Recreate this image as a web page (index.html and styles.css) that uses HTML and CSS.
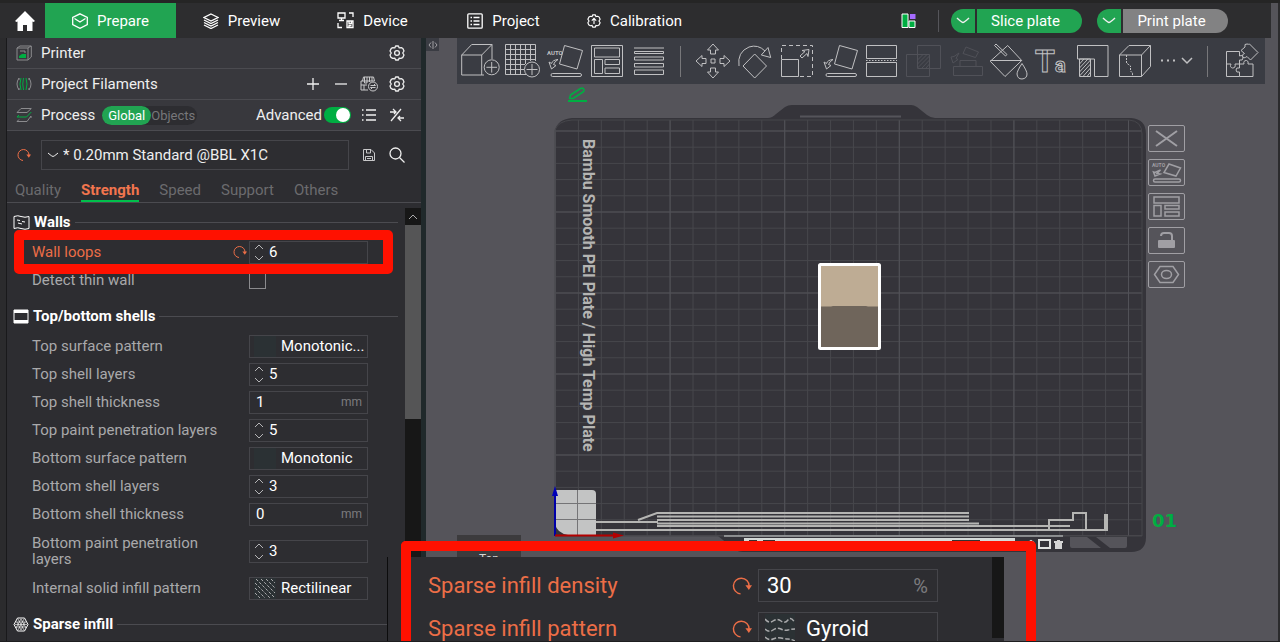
FILE: index.html
```html
<!DOCTYPE html>
<html lang="en">
<head>
    <meta charset="UTF-8">
    <meta name="viewport" content="width=device-width, initial-scale=1.0">
    <title>Slicer - Prepare</title>
    <link rel="stylesheet" href="styles.css">
</head>
<body>

<!-- shared icons -->
<svg class="sprite" aria-hidden="true">
    <symbol id="gear" viewBox="0 0 16 16">
        <path d="M5.8 2.9 L6.6 1 H9.4 L10.2 2.9 L12.3 2.6 L13.9 3.5 L15 6 L13.7 8 L15 10 L13.7 12.6 L11.9 13.4 L10.2 13.1 L9.4 15 H6.6 L5.8 13.1 L3.7 13.4 L2 12.4 L1 10 L2.3 8 L1 6 L2.3 3.4 L3.9 2.6 Z" stroke-linejoin="round"/>
        <circle cx="8" cy="8" r="2.4"/>
    </symbol>
    <symbol id="revert" viewBox="0 0 14 14">
        <path d="M6 12.5 A5.5 5.5 0 1 1 12 7"/>
        <path class="solid" d="M9.4 6.4 L14 6.4 L11.8 9.8 Z"/>
    </symbol>
    <symbol id="up" viewBox="0 0 10 6"><path d="M1 5 L5 1 L9 5"/></symbol>
    <symbol id="down" viewBox="0 0 10 6"><path d="M1 1 L5 5 L9 1"/></symbol>
    <symbol id="tilt" viewBox="0 0 38 38">
        <path d="M19.5 3.5 L37.5 8.5 L32 27 L14.5 22 Z"/>
        <rect x="6" y="31.5" width="30.5" height="3" rx="1.5"/>
        <path d="M4 20 L6.5 27 L11 23.5 L8.5 22.5 Q9.5 19.5 13 17.5 Q7.500 18 6.5 21.5 Z"/>
    </symbol>
</svg>

<header class="topbar">
    <button class="home" type="button" aria-label="Home">
        <svg width="20" height="20" viewBox="0 0 20 20"><path fill="#fff" d="M10 0 L20 10 L18.500 11 L17.500 10.500 V20 H12 V14 H8 V20 H2.500 V10.500 L1.500 11 L0 10 Z"/></svg>
    </button>
    <nav class="tabs">
        <a class="tab active" href="#">
            <svg width="16" height="16" viewBox="0 0 16 16"><path d="M8 .8 L15.300 4.500 V11.500 L8 15.300 L.7 11.500 V4.500 Z M2.500 5.500 L8 9 L13.500 5.500"/></svg>
            Prepare
        </a>
        <a class="tab" href="#">
            <svg width="16" height="16" viewBox="0 0 16 16"><path d="M8 1 L15 4.500 L8 8 L1 4.500 Z M1 7 L8 10.500 L15 7 M1 9.500 L8 13 L15 9.500 M1 12 L8 15.500 L15 12"/></svg>
            Preview
        </a>
        <a class="tab" href="#">
            <svg width="17" height="17" viewBox="0 0 17 17"><path d="M1 1 H8 V6 H1 Z M4.500 6 V8 M2 8.500 H7 M12 1 H16 V5 M1 11 V15.500 H5 M10 9 H16 V15.500 H10 Z M12 9 V11.500 H14.500 V9 M12 15 V13.500 H14.500"/></svg>
            Device
        </a>
        <a class="tab" href="#">
            <svg width="16" height="16" viewBox="0 0 16 16"><rect x=".8" y=".8" width="14.400" height="14.400" rx="1"/><path d="M3.500 4.500 H5 M6.500 4.500 H12.500 M3.500 8 H5 M6.500 8 H12.500 M3.500 11.500 H5 M6.500 11.500 H12.500"/></svg>
            Project
        </a>
        <a class="tab" href="#">
            <svg width="14" height="14" viewBox="0 0 16 16"><path d="M5.800 2.900 L6.600 1 H9.400 L10.200 2.900 L12.300 2.600 L13.900 3.500 L15 6 L13.700 8 L15 10 L13.700 12.600 L11.900 13.400 L10.200 13.100 L9.400 15 H6.600 L5.800 13.100 L3.700 13.400 L2 12.400 L1 10 L2.300 8 L1 6 L2.300 3.400 L3.900 2.600 Z M8 11.500 V6 M5.500 7.500 L8 5 L10.500 7.500"/></svg>
            Calibration
        </a>
    </nav>
    <div class="actions">
        <button class="layout" type="button" aria-label="Layout">
            <svg width="16" height="16" viewBox="0 0 16 16"><path fill="#00ae42" stroke="#fff" d="M1 1 H7 V14.500 H1 Z M8 8 H14 V14.500 H8 Z"/><path fill="#a56bff" stroke="none" d="M9 1 H14.500 V6 H9 Z"/></svg>
        </button>
        <div class="split">
            <button class="split-arrow" type="button" aria-label="Slice options"><svg width="14" height="7" viewBox="0 0 14 7"><path d="M1 1 Q6 5.500 7 5.500 Q8 5.500 13 1"/></svg></button>
            <button class="split-main" type="button">Slice plate</button>
        </div>
        <div class="split">
            <button class="split-arrow" type="button" aria-label="Print options"><svg width="14" height="7" viewBox="0 0 14 7"><path d="M1 1 Q6 5.500 7 5.500 Q8 5.500 13 1"/></svg></button>
            <button class="split-main disabled" type="button">Print plate</button>
        </div>
    </div>
</header>

<main class="workspace">
    <aside class="sidebar">
        <section class="bar">
            <svg class="bar-icon" width="16" height="16" viewBox="0 0 16 16"><path d="M1 3 L4 1 H15.300 V12 L12 15 H1 Z M1 3 H12 V15 M12 3 L15 1 M4 6 H9 V8"/><path class="green" d="M3 13 V11 L6 9 H10 V13 Z"/></svg>
            <h2>Printer</h2>
            <button class="icon-btn push" type="button" aria-label="Printer settings"><svg width="16" height="16"><use href="#gear"/></svg></button>
        </section>
        <section class="bar">
            <svg class="bar-icon" width="16" height="16" viewBox="0 0 16 16"><path d="M3 2 Q-1 8 3 14 M13 2 Q17 8 13 14 M2 3 H4 M12 3 H14 M2 13 H4 M12 13 H14"/><path class="green-line" d="M5 2 Q3 8 5 14 M7.500 2 Q6 8 7.500 14 M10 2 Q12 8 10 14"/></svg>
            <h2>Project Filaments</h2>
            <button class="icon-btn push" type="button" aria-label="Add filament"><svg width="14" height="14" viewBox="0 0 14 14"><path d="M7 1 V13 M1 7 H13"/></svg></button>
            <button class="icon-btn" type="button" aria-label="Remove filament"><svg width="14" height="14" viewBox="0 0 14 14"><path d="M1 7 H13"/></svg></button>
            <button class="icon-btn thin" type="button" aria-label="Sync filaments"><svg width="18" height="16" viewBox="0 0 18 16"><path d="M2.500 5 L3.500 1 H13.500 L14.500 5 M1 5 H14.500 M1 5 V14 H8 M4.500 1 V7 H7 V1 M9.500 1 V6 M12 1 V5 M1 9 H7 M4 9 V14"/><circle cx="13" cy="10.500" r="4.500"/><path d="M10.500 9.500 H15.500 L14 8 M15.500 11.500 H10.500 L12 13"/></svg></button>
            <button class="icon-btn" type="button" aria-label="Filament settings"><svg width="16" height="16"><use href="#gear"/></svg></button>
        </section>
        <section class="bar">
            <svg class="bar-icon" width="16" height="16" viewBox="0 0 16 16"><path d="M5 1.500 H15.300 L11 5.500 H1 Z M15 9 L11 14.500 H1 L3 12.500 M15 9 V11"/><path class="green-line" d="M1 10 H10.500 L15.300 5 M1 10 L3 8"/></svg>
            <h2>Process</h2>
            <div class="scope">
                <button class="scope-on" type="button">Global</button>
                <button type="button">Objects</button>
            </div>
            <label class="push advanced" for="advanced">Advanced</label>
            <input class="switch" type="checkbox" id="advanced" checked>
            <button class="icon-btn" type="button" aria-label="Parameter list"><svg width="16" height="14" viewBox="0 0 16 14"><path d="M1 2 H2.500 M5 2 H15 M1 7 H2.500 M5 7 H15 M1 12 H2.500 M5 12 H15"/></svg></button>
            <button class="icon-btn" type="button" aria-label="Compare presets"><svg width="16" height="16" viewBox="0 0 16 16"><path d="M2 14 L12 2 M1 5 H7 M4 2 L7 5 L5 7 M15 11 H9 M12 14 L9 11 L11 9"/></svg></button>
        </section>

        <div class="preset">
            <button class="revert" type="button" aria-label="Reset preset"><svg width="14" height="14"><use href="#revert"/></svg></button>
            <div class="preset-box">
                <svg width="12" height="6" viewBox="0 0 12 6"><path d="M1 1 Q5 4.500 6 4.500 Q7 4.500 11 1"/></svg>
                <select aria-label="Process preset"><option>* 0.20mm Standard @BBL X1C</option></select>
            </div>
            <button class="icon-btn thin" type="button" aria-label="Save preset"><svg width="14" height="14" viewBox="0 0 14 14"><path d="M1.500 1.500 H9 L12.500 5 V12.500 H1.500 Z M4.500 1.500 V5 H8.500 V1.500 M3.500 12.500 V8.500 H10.500 V12.500 M5 10.500 H9"/></svg></button>
            <button class="icon-btn" type="button" aria-label="Search"><svg width="16" height="16" viewBox="0 0 16 16"><circle cx="6.500" cy="6.500" r="5.500"/><path d="M10.500 10.500 L15.500 15.500"/></svg></button>
        </div>

        <nav class="pages">
            <a href="#">Quality</a>
            <a class="current" href="#">Strength</a>
            <a href="#">Speed</a>
            <a href="#">Support</a>
            <a href="#">Others</a>
        </nav>

        <div class="params">
            <div class="param-list">
                <section class="group">
                    <h3>
                        <svg width="17" height="15" viewBox="0 0 17 15"><path d="M1 1.500 Q5 0 8 1.500 Q12 3 16 1.500 V13.500 Q12 15 8 13.500 Q5 12 1 13.500 Z M4 5 L7 5.500 M5 8 L9 9 M9 6.500 L12 7"/></svg>
                        Walls
                    </h3>
                    <div class="row changed">
                        <label for="loops">Wall loops</label>
                        <button class="revert" type="button" aria-label="Reset wall loops"><svg width="14" height="14"><use href="#revert"/></svg></button>
                        <div class="field">
                            <span class="steps"><button type="button" aria-label="More"><svg width="10" height="6"><use href="#up"/></svg></button><button type="button" aria-label="Less"><svg width="10" height="6"><use href="#down"/></svg></button></span>
                            <input type="text" id="loops" value="6">
                        </div>
                    </div>
                    <div class="row">
                        <label for="thin">Detect thin wall</label>
                        <input class="check" type="checkbox" id="thin">
                    </div>
                </section>

                <section class="group">
                    <h3>
                        <svg width="16" height="15" viewBox="0 0 16 15"><path d="M1 1 H15 V14 H1 Z"/><path d="M1 2.500 H15 M1 12.500 H15" stroke-width="3"/></svg>
                        Top/bottom shells
                    </h3>
                    <div class="row">
                        <label for="topPattern">Top surface pattern</label>
                        <div class="field">
                            <span class="swatch"></span>
                            <select id="topPattern"><option>Monotonic...</option></select>
                        </div>
                    </div>
                    <div class="row">
                        <label for="topLayers">Top shell layers</label>
                        <div class="field">
                            <span class="steps"><button type="button" aria-label="More"><svg width="10" height="6"><use href="#up"/></svg></button><button type="button" aria-label="Less"><svg width="10" height="6"><use href="#down"/></svg></button></span>
                            <input type="text" id="topLayers" value="5">
                        </div>
                    </div>
                    <div class="row">
                        <label for="topThick">Top shell thickness</label>
                        <div class="field"><input type="text" id="topThick" value="1"><span class="unit">mm</span></div>
                    </div>
                    <div class="row">
                        <label for="topPaint">Top paint penetration layers</label>
                        <div class="field">
                            <span class="steps"><button type="button" aria-label="More"><svg width="10" height="6"><use href="#up"/></svg></button><button type="button" aria-label="Less"><svg width="10" height="6"><use href="#down"/></svg></button></span>
                            <input type="text" id="topPaint" value="5">
                        </div>
                    </div>
                    <div class="row">
                        <label for="botPattern">Bottom surface pattern</label>
                        <div class="field">
                            <span class="swatch"></span>
                            <select id="botPattern"><option>Monotonic</option></select>
                        </div>
                    </div>
                    <div class="row">
                        <label for="botLayers">Bottom shell layers</label>
                        <div class="field">
                            <span class="steps"><button type="button" aria-label="More"><svg width="10" height="6"><use href="#up"/></svg></button><button type="button" aria-label="Less"><svg width="10" height="6"><use href="#down"/></svg></button></span>
                            <input type="text" id="botLayers" value="3">
                        </div>
                    </div>
                    <div class="row">
                        <label for="botThick">Bottom shell thickness</label>
                        <div class="field"><input type="text" id="botThick" value="0"><span class="unit">mm</span></div>
                    </div>
                    <div class="row tall">
                        <label for="botPaint">Bottom paint penetration layers</label>
                        <div class="field">
                            <span class="steps"><button type="button" aria-label="More"><svg width="10" height="6"><use href="#up"/></svg></button><button type="button" aria-label="Less"><svg width="10" height="6"><use href="#down"/></svg></button></span>
                            <input type="text" id="botPaint" value="3">
                        </div>
                    </div>
                    <div class="row">
                        <label for="solid">Internal solid infill pattern</label>
                        <div class="field">
                            <svg class="swatch" viewBox="0 0 22 21"><path stroke-dasharray="3 1.500" d="M2 1 L20 19 M7 1 L21 15 M12 1 L21 10 M17 1 L21 5 M1 5 L16 20 M1 10 L11 20 M1 15 L6 20"/></svg>
                            <select id="solid"><option>Rectilinear</option></select>
                        </div>
                    </div>
                </section>

                <section class="group">
                    <h3>
                        <svg width="16" height="15" viewBox="0 0 16 15"><path d="M4.500 1 H11.500 L15 7.500 L11.500 14 H4.500 L1 7.500 Z"/><path stroke-width=".6" d="M3 5 H13 M2 7.500 H14 M3 10 H13 M5 2 L11 13 M8 2 L13 11 M11 2 L5 13 M8 2 L3 11 M4 5 L8 13 M12 5 L8 13"/></svg>
                        Sparse infill
                    </h3>
                </section>
            </div>
            <div class="scroll">
                <button type="button" aria-label="Scroll up"><svg width="10" height="6"><use href="#up"/></svg></button>
                <div class="thumb"></div>
            </div>
        </div>
    </aside>

    <section class="canvas">
        <svg class="scene" viewBox="426 38 852 603">
            <defs>
                <pattern id="minor" x="555" y="130.500" width="22.920" height="16.200" patternUnits="userSpaceOnUse"><path d="M0 .5 H23 M.5 0 V17" stroke="#46464b"/></pattern>
                <pattern id="major" x="555" y="130.500" width="114.600" height="81" patternUnits="userSpaceOnUse"><path d="M0 .5 H115 M.5 0 V81" stroke="#515157"/></pattern>
            </defs>
            <!-- plate -->
            <path fill="#35343a" d="M555 536 V130 Q558 119 572 118 H768 Q772 118 776 114 L785 107 Q788 105 792 105 H911 Q914 105 917 107 L927 115 Q931 118 935 118 H1131 Q1146 119 1146 134 V537 Q1146 552 1131 552 H743 Q735 552 728 544 L718 536 Z"/>
            <path fill="url(#minor)" d="M555 536 V130 Q558 121 572 120 H1129 Q1142 121 1142 134 V536 Z"/>
            <path fill="url(#major)" stroke="#46464b" d="M555 536 V130 Q558 121 572 120 H1129 Q1142 121 1142 134 V536 Z"/>
            <path stroke="#55545a" stroke-width="2" d="M800 116.500 H901"/>
            <text class="plate-name" transform="translate(583 139) rotate(90)">Bambu Smooth PEI Plate / High Temp Plate</text>
            <!-- nozzle wipe strips -->
            <g fill="none" stroke="#b5b5b3">
                <path stroke-width="2" d="M596 530 H1105 M596 522 H658 M638 520 L657 513 H969 M657 516.500 H969 M657 520 H969 M657 523.500 H979 M657 526 H1070 M1049 530 V520 H1073 V513 H1086 V530"/>
                <path stroke-width="4" d="M1106 514 V531"/>
                <path stroke="#d5dad8" d="M724 536 H1063"/>
            </g>
            <path fill="#d5dad8" d="M744 538 H1015 V544 H744 Z"/>
            <path fill="#333" d="M749 540 H757 V544 H749 Z M763 540 H775 V544 H763 Z M952 540 H980 V541 H952 Z"/>
            <path fill="none" stroke="#e0e2e1" stroke-width="2" d="M1028 543 L1031 541 L1034 543 M1039 540 H1050 V548 H1039 Z"/>
            <path fill="#d5d5d5" d="M1054 541 H1057 V540 H1060 V541 H1063 V543 H1062 V549 H1055 V543 H1054 Z"/>
            <path fill="#55545a" d="M1070 537 H1087 L1101 548 H1072 Q1070 548 1070 546 Z M1096 537 H1127 V546 Q1127 548 1125 548 H1110 Z"/>
            <!-- origin corner and axes -->
            <path fill="#c3c4c4" d="M555 490 H592 Q596 490 596 494 V535 H568 Q557 533 555 524 Z"/>
            <path stroke="#747476" d="M577.500 490 V535 M555 503.500 H596 M555 519.500 H596"/>
            <path stroke="#0000a8" stroke-width="2" d="M555 493 V536"/>
            <path fill="#0000b8" d="M555 486 L558 496 H552 Z"/>
            <path stroke="#b30000" stroke-width="2" d="M555 535.500 H615"/>
            <path fill="#b30000" d="M613 532.500 L624 535.500 L613 538.500 Z"/>
            <!-- model -->
            <rect x="819.500" y="264.500" width="60" height="84" rx="1" fill="#beac94" stroke="#fff" stroke-width="3"/>
            <path fill="#6f655b" d="M821 306.500 H831 L833 306 H866 L868 306.500 H878 V347 H821 Z"/>
            <text class="plate-no" x="1152" y="527">01</text>
            <path fill="none" stroke="#00ae42" stroke-width="2" d="M568 101 H587"/>
            <path fill="none" stroke="#00ae42" stroke-width="1.600" stroke-linejoin="round" d="M569.500 98.500 L570.500 95 L580.500 88.500 Q583 87.500 584 89.500 Q584.500 91 583 92 L573 98.500 Z"/>
            <rect x="457" y="535" width="64" height="64" fill="#3c3b3d"/>
            <text class="cube-face" x="489" y="563">Top</text>
        </svg>

        <button class="collapse" type="button" aria-label="Collapse sidebar"><svg width="10" height="8" viewBox="0 0 10 8"><path d="M3 1.500 L1 4 L3 6.500 M5 0 V8 M7 1.500 L9 4 L7 6.500"/></svg></button>

        <div class="toolbar">
            <button type="button" aria-label="Add"><svg viewBox="0 0 38 38"><path d="M23 33 H.7 V13 H20.700 V33 M.7 13 L10.700 2.500 H31 V17 M20.700 13 L31 2.500"/><circle cx="30.700" cy="25.300" r="7.500"/><path d="M30.700 20 V30.600 M25.400 25.300 H36"/></svg></button>
            <button type="button" aria-label="Add plate"><svg viewBox="0 0 38 38"><path d="M32.500 19 V2.500 H2.500 V32.500 H23 M7.500 2.500 V32.500 M12.500 2.500 V32.500 M17.500 2.500 V32.500 M22.500 2.500 V22 M27.500 2.500 V19 M2.500 7.500 H32.500 M2.500 12.500 H32.500 M2.500 17.500 H32.500 M2.500 22.500 H22 M2.500 27.500 H21"/><circle cx="29" cy="27.500" r="7.500"/><path d="M29 22 V33 M23.500 27.500 H34.500"/></svg></button>
            <button type="button" aria-label="Auto orient"><svg viewBox="0 0 38 38"><use href="#tilt"/><text x="2" y="12.500">AUTO</text></svg></button>
            <button type="button" aria-label="Arrange"><svg viewBox="0 0 38 38"><path d="M4.500 3.500 H35.500 V34.500 H4.500 Z M7.500 6 H32.500 V15 H7.500 Z M7.500 17.500 H15.500 V31.500 H7.500 Z M18 17.500 H32.500 V22.500 H18 Z M18 26 H32.500 V31.500 H18 Z"/></svg></button>
            <button type="button" aria-label="Layer height"><svg viewBox="0 0 38 38"><path d="M5 6 H35 M5.500 9.500 H34.500 V11.500 H5.500 Z M5.500 15 H34.500 V18 H5.500 Z M5.500 21.500 H34.500 V25 H5.500 Z M5.500 28 H34.500 V32.500 H5.500 Z"/></svg></button>
            <span class="sep"></span>
            <button type="button" aria-label="Move"><svg viewBox="0 0 38 38"><path d="M17 17 H21 V21 H17 Z M19 2 L24.500 8 H21.500 V12 H16.500 V8 H13.500 Z M19 36 L24.500 30 H21.500 V26 H16.500 V30 H13.500 Z M2 19 L8 13.500 V16.500 H12 V21.500 H8 V24.500 Z M36 19 L30 13.500 V16.500 H26 V21.500 H30 V24.500 Z"/></svg></button>
            <button type="button" aria-label="Rotate"><svg viewBox="0 0 38 38"><path d="M18.700 12 L30.500 24 L18.700 36 L7 24 Z M3 24 Q1 10 13 5 Q22 2 29 9 M25.300 13 L32 5.500 L34.700 15.500 Z"/></svg></button>
            <button type="button" aria-label="Scale"><svg viewBox="0 0 38 38"><path d="M3.500 17.500 H20.500 V34.500 H3.500 Z M22 14 L27 9.500 L24 8.500 L31 7.500 L30 14.500 L29 11.500 L24 16 Z"/><path stroke-dasharray="4 3" d="M3.500 17 V3.500 H34.500 V34.500 H21"/></svg></button>
            <button type="button" aria-label="Lay on face"><svg viewBox="0 0 38 38"><use href="#tilt"/></svg></button>
            <button type="button" aria-label="Cut"><svg viewBox="0 0 38 38"><path d="M4.500 3.500 H34.500 V16.500 H4.500 Z M4.500 20.500 H34.500 V34.500 H4.500 Z"/><path stroke-dasharray="1.500 1.500" d="M4 18.500 H35"/></svg></button>
            <button class="dim" type="button" aria-label="Mesh boolean"><svg viewBox="0 0 38 38"><path d="M2.500 12.500 H25.500 V34.500 H2.500 Z M13.500 3.500 H36.500 V26.500 H13.500 Z M13.500 18 L19 12.500 M13.500 22 L23 12.500 M13.500 26 L25.500 14 M18 26 L25.500 18 M22 26 L25.500 22"/></svg></button>
            <button class="dim" type="button" aria-label="Assemble"><svg viewBox="0 0 38 38"><path d="M7.500 24.500 H36.500 V33.500 H7.500 Z M14 18.500 H30 V24 M14 18.500 V24 M20 5 L32.500 10 L29.500 15.500 L17 11.500 Z M5 15 L7 21 L12 17.500 L10 16.500 L13 11 L8 14.500 Z"/></svg></button>
            <button type="button" aria-label="Color painting"><svg viewBox="0 0 38 38"><path d="M19.700 3.500 L33.700 18.500 L17 34.500 L2.300 19.300 Z M2.300 18.500 H33.700 M6.500 3.500 L8 2 L19 12.500 L17.500 14 Z M34 21.500 Q29 29 29 32 Q29.500 37 34 37 Q39 36.500 39 32 Q39 29 34 21.500 Z"/></svg></button>
            <button type="button" aria-label="Text shape"><svg viewBox="0 0 38 38"><text class="big" x="5" y="30">T</text><text class="small" x="25" y="30">a</text></svg></button>
            <button type="button" aria-label="Support painting"><svg viewBox="0 0 38 38"><path d="M5.500 17 V3.500 H36 V34.500 H22.500 V17 H5.500 M7.500 17 H18.500 V34.500 H7.500 Z M7.500 22 L12 17 M7.500 26 L16 17 M7.500 30 L18.500 18 M7.500 34 L18.500 22 M11 34.500 L18.500 26 M15 34.500 L18.500 30"/></svg></button>
            <button type="button" aria-label="Seam painting"><svg viewBox="0 0 38 38"><path d="M5.500 13 H27.500 V34.500 H5.500 Z M5.500 13 L15 3.500 H36.500 V24.500 L27.500 34.500 M27.500 13 L36.500 3.500"/><path stroke-dasharray="2 1" d="M12.500 13 V21 L16.500 24 V29 L18.500 31 V34"/></svg></button>
            <button type="button" aria-label="More tools"><svg viewBox="0 0 38 38"><path stroke-width="2" stroke-dasharray="2 4" d="M5 18.500 H20"/><path stroke-width="1.500" d="M26 16 L31 21 L36 16"/></svg></button>
            <span class="sep"></span>
            <button type="button" aria-label="Assembly view"><svg viewBox="0 0 38 38"><path d="M5.500 9.500 H18.500 V14 Q22 12.500 22 16 Q22 19 18.500 18 V22 H14 Q15 26 11.500 26 Q8.500 25.500 10 22 H5.500 Z M5.500 22 V34.500 H18.500 V30 Q15 31 15 28 Q15 25 18.500 26 V22 H23 Q22 18.500 25.500 18.500 Q28 19 27 22 H32 V34.500 H18.500 M20 8.500 L24 5 Q23 1.500 26 2 Q28 2.500 28.500 2 L37 10.500 L29.500 18 L26 14.500 Q22.500 17 21.500 14.500 Q21 12 23.500 11.500 Z"/></svg></button>
        </div>

        <div class="plate-tools">
            <button type="button" aria-label="Delete plate"><svg viewBox="0 0 37 27"><path stroke-width="2" d="M8 6 L29 21 M29 6 L8 21"/></svg></button>
            <button type="button" aria-label="Orient plate"><svg viewBox="0 0 37 27"><path stroke-width="1.500" d="M21 5 L32.500 9 L28 17 L16 13.500 Z M5.500 13 L7 17 L12 15 L9 14.500 L12.500 11 L7 13.500 Z"/><rect stroke-width="1.500" x="5.500" y="20" width="27" height="3" rx="1.500"/><text x="4" y="8">AUTO</text></svg></button>
            <button type="button" aria-label="Arrange plate"><svg viewBox="0 0 37 27"><path stroke-width="1.500" d="M6 4 H31 V10 H6 Z M6 12.500 H13 V23 H6 Z M17 12.500 H31 V16 H17 Z M17 19 H31 V23 H17 Z"/></svg></button>
            <button type="button" aria-label="Lock plate"><svg viewBox="0 0 37 27"><path fill="#a09fa4" stroke="none" d="M11 13 H26 Q27 13 27 14 V20 Q27 21 26 21 H11 Q10 21 10 20 V14 Q10 13 11 13 Z"/><path stroke-width="2" d="M13 9 Q13 6 16 6 H21 Q24 6 24 9 V13"/></svg></button>
            <button type="button" aria-label="Plate settings"><svg viewBox="0 0 37 27"><path stroke-width="1.500" d="M12 5.500 H25 L30.500 13.500 L25 21.500 H12 L6.500 13.500 Z"/><ellipse stroke-width="1.500" cx="18.500" cy="13.500" rx="5" ry="4"/></svg></button>
        </div>
    </section>

    <!-- enlarged infill settings over the scene -->
    <section class="inset">
        <div class="inset-rows">
            <div class="inset-row">
                <label for="density">Sparse infill density</label>
                <button class="revert" type="button" aria-label="Reset density"><svg width="20" height="20"><use href="#revert"/></svg></button>
                <div class="field"><input type="text" id="density" value="30"><span class="unit">%</span></div>
            </div>
            <div class="inset-row">
                <label for="infill">Sparse infill pattern</label>
                <button class="revert" type="button" aria-label="Reset pattern"><svg width="20" height="20"><use href="#revert"/></svg></button>
                <div class="field">
                    <svg class="swatch" viewBox="0 0 30 30"><path stroke-width="1.500" stroke-dasharray="5 2" d="M0 5 Q4 10 8 7 T16 7 T23 6 T30 9 M0 15 Q4 19 8 16 T16 15 T23 16 T30 15 M0 23 Q4 27 8 25 T16 24 T23 25 T30 27"/></svg>
                    <select id="infill"><option>Gyroid</option></select>
                </div>
            </div>
        </div>
        <div class="inset-scroll"></div>
    </section>

    <div class="mark mark-walls"></div>
    <div class="mark mark-infill"></div>
</main>

</body>
</html>
```
FILE: styles.css
```css
* {
    box-sizing: border-box;
}
body {
    margin: 0;
    height: 100vh;
    display: flex;
    flex-direction: column;
    overflow: hidden;
    background-color: #2b2b2d;
    border-top: 3px solid #252525;
    border-bottom: 1px solid #1e1e20;
    font-family: Roboto, "Open Sans", sans-serif;
    font-size: 15px;
    color: #efefef;
}
button, input, select {
    font: inherit;
    color: inherit;
    background: none;
    border: none;
    padding: 0;
    margin: 0;
}
button {
    display: flex;
    align-items: center;
    justify-content: center;
    cursor: pointer;
}
select {
    appearance: none;
}
a {
    text-decoration: none;
    color: inherit;
}
h2, h3 {
    margin: 0;
    font-size: 15px;
    font-weight: 400;
}
svg {
    flex: none;
    fill: none;
    stroke: currentColor;
}
.sprite {
    position: absolute;
    width: 0;
    height: 0;
}
.solid {
    fill: currentColor;
    stroke: none;
}

/* top bar */
.topbar {
    display: flex;
    align-items: stretch;
    height: 35px;
    flex: none;
    margin-right: 9px;
    padding-left: 5px;
    background-color: #2d2d2f;
    box-shadow: 7px 0 #55545a;
}
.home {
    width: 40px;
}
.home svg {
    stroke: none;
}
.tabs {
    display: flex;
}
.tab {
    width: 131px;
    display: flex;
    align-items: center;
    justify-content: center;
    gap: 9px;
    color: #fff;
}
.tab svg {
    stroke-width: 1.3;
}
.tab.active {
    background-color: #21a452;
}
.actions {
    display: flex;
    align-items: center;
    gap: 15px;
    margin-left: auto;
    padding-right: 43px;
}
.layout {
    height: 22px;
    padding-right: 21px;
    border-right: 1px solid #55555a;
    margin-right: -3px;
}
.split {
    display: flex;
    gap: 2px;
    height: 24px;
}
.split-arrow {
    width: 24px;
    border-radius: 12px 0 0 12px;
    background-color: #21a452;
}
.split-arrow svg {
    stroke-width: 1.5;
}
.split-main {
    width: 105px;
    padding-right: 8px;
    border-radius: 0 12px 12px 0;
    background-color: #21a452;
    color: #fff;
}
.split-main.disabled {
    background-color: #828283;
}

.workspace {
    position: relative;
    flex: 1;
    min-height: 0;
    display: flex;
    padding: 0 2px 0 6px;
    overflow: hidden;
}

/* left panel */
.sidebar {
    width: 420px;
    flex: none;
    display: flex;
    flex-direction: column;
    background-color: #2d2d31;
    border-left: 1px solid #19191b;
    border-right: 5px solid #20292b;
    overflow: hidden;
}
.bar {
    display: flex;
    align-items: center;
    gap: 8px;
    height: 31px;
    flex: none;
    padding: 0 14px 0 9px;
    background-color: #38383d;
    border-bottom: 1px solid #4b4b50;
}
.bar-icon {
    color: #8b8b8e;
    margin-right: 1px;
}
.green {
    fill: #00ae42;
    stroke: none;
}
.green-line {
    stroke: #00ae42;
}
.push {
    margin-left: auto;
}
.icon-btn {
    width: 20px;
    height: 20px;
    stroke-width: 1.3;
}
.icon-btn.thin {
    stroke-width: 1;
    color: #c8c8ca;
}
.scope {
    display: flex;
    margin-left: -1px;
    border-radius: 10px;
    background-color: #2d2d31;
    font-size: 13px;
    color: #77777a;
}
.scope button {
    height: 19px;
    padding-right: 2px;
}
.scope .scope-on {
    width: 49px;
    padding: 0;
    border-radius: 10px;
    background-color: #21a452;
    color: #fff;
}
.advanced + .switch {
    margin-left: -6px;
}
.switch {
    appearance: none;
    width: 27px;
    height: 16px;
    padding: 1px;
    border-radius: 8px;
    background-color: #00ae42;
    display: flex;
    justify-content: flex-end;
}
.switch::before {
    content: "";
    width: 14px;
    height: 14px;
    border-radius: 50%;
    background-color: #fff;
}
.switch:not(:checked) {
    justify-content: flex-start;
    background-color: #77777a;
}
.preset {
    display: flex;
    align-items: center;
    gap: 8px;
    flex: none;
    padding: 9px 14px 6px 8px;
}
.revert {
    color: #ec6e47;
    width: 18px;
}
.preset-box {
    flex: 1;
    height: 30px;
    display: flex;
    align-items: center;
    gap: 4px;
    padding: 0 5px;
    border: 1px solid #45454a;
    margin-right: 2px;
}
.preset-box select {
    flex: 1;
}
.pages {
    display: flex;
    gap: 20px;
    flex: none;
    padding-left: 8px;
    border-bottom: 1px solid #4b4b50;
    color: #6b6b6e;
}
.pages a {
    height: 26px;
    line-height: 28px;
}
.pages .current {
    color: #f2754e;
    font-weight: 700;
    border-bottom: 2px solid #00c04b;
}

/* parameter list */
.params {
    flex: 1;
    min-height: 0;
    display: flex;
    padding-top: 5px;
}
.param-list {
    flex: 1;
    display: flex;
    flex-direction: column;
    gap: 8px;
    padding-right: 7px;
}
.group h3 {
    display: flex;
    align-items: center;
    gap: 4px;
    height: 28px;
    margin-bottom: 2px;
    padding-left: 6px;
    font-weight: 700;
    color: #fff;
}
.group h3::after {
    content: "";
    flex: 1;
    height: 1px;
    background-color: #4b4b50;
}
.row {
    display: grid;
    grid-template-columns: 200px 17px 119px;
    align-items: center;
    height: 28px;
    padding-left: 25px;
    line-height: 16px;
    color: #a9a9ab;
}
.row.tall {
    height: 46px;
}
.row.changed label {
    color: #ec6e47;
}
.row .revert {
    width: 16px;
}
.field, .check {
    grid-column: 3;
}
.field {
    display: flex;
    align-items: center;
    height: 23px;
    padding: 0 2px;
    border: 1px solid #45454a;
    color: #fff;
}
.field input, .field select {
    flex: 1;
    min-width: 0;
    padding-left: 4px;
}
.steps {
    display: flex;
    flex-direction: column;
    gap: 5px;
    width: 13px;
    color: #b5b5b7;
}
.unit {
    margin-right: 3px;
    color: #7c7c7f;
    font-size: 12px;
}
.swatch {
    width: 22px;
    height: 21px;
    margin: 0 1px 0 2px;
    background-color: #2b3134;
    color: #a9a9ab;
}
.check {
    appearance: none;
    width: 17px;
    height: 17px;
    border: 1px solid #8b8b8e;
}
.scroll {
    width: 16px;
    background-color: #171717;
}
.scroll button {
    width: 16px;
    height: 17px;
    color: #a9a9ab;
}
.thumb {
    height: 194px;
    background-color: #555556;
}

/* 3D view */
.canvas {
    position: relative;
    flex: 1;
    min-width: 0;
    background-color: #55545a;
}
.scene {
    position: absolute;
    width: 100%;
    height: 100%;
    stroke: none;
}
.plate-name {
    font-size: 16px;
    font-weight: 700;
    fill: #b5b5b3;
}
.plate-no {
    font-family: "DejaVu Sans", sans-serif;
    font-size: 18px;
    font-weight: 700;
    fill: #00ae42;
}
.cube-face {
    font-size: 12px;
    text-anchor: middle;
    fill: #d5d5d5;
}
.collapse {
    position: absolute;
    left: 0;
    top: 0;
    width: 13px;
    height: 13px;
    background-color: #3a3c43;
    color: #a09fa4;
}
.toolbar {
    position: relative;
    display: flex;
    align-items: center;
    gap: 4px;
    height: 46px;
    margin: 0 13px 0 31px;
    padding-left: 4px;
    background-color: #3a3c43;
    color: #c0c0c2;
}
.toolbar svg {
    width: 38px;
    height: 38px;
    overflow: visible;
}
.toolbar text {
    font-size: 6px;
    font-weight: 700;
    fill: currentColor;
    stroke: none;
}
.toolbar .big, .toolbar .small {
    font-size: 32px;
    fill: none;
    stroke: currentColor;
}
.toolbar .small {
    font-size: 20px;
}
.sep {
    width: 1px;
    height: 31px;
    margin: 0 9px;
    background-color: #77777a;
}
.dim {
    color: #505158;
}
.plate-tools {
    position: absolute;
    top: 87px;
    right: 93px;
    display: flex;
    flex-direction: column;
    gap: 7px;
    color: #a09fa4;
}
.plate-tools button {
    width: 37px;
    height: 27px;
    border: 1px solid #a09fa4;
    border-radius: 2px;
}
.plate-tools svg {
    width: 37px;
    height: 27px;
}
.plate-tools text {
    font-size: 5px;
    font-weight: 700;
    fill: currentColor;
    stroke: none;
}

/* enlarged settings */
.inset {
    position: absolute;
    left: 387px;
    top: 519px;
    bottom: 0;
    width: 617px;
    display: flex;
    background-color: #2d2d31;
    border-left: 1px solid #0c0c0d;
    font-size: 22px;
    overflow: hidden;
}
.inset-rows {
    flex: 1;
    display: flex;
    flex-direction: column;
    gap: 10px;
    padding: 12px 54px 0 40px;
}
.inset-row {
    display: flex;
    align-items: center;
    gap: 6px;
    color: #ec6e47;
}
.inset-row label {
    flex: 1;
}
.inset .field {
    width: 180px;
    height: 33px;
    padding: 0 6px 0 4px;
}
.inset .unit {
    font-size: 20px;
}
.inset .swatch {
    width: 30px;
    height: 30px;
    margin-right: 7px;
}
.inset .revert {
    width: 20px;
}
.inset-scroll {
    width: 12px;
    margin-bottom: 3px;
    background-color: #171717;
}

/* red highlight frames */
.mark {
    position: absolute;
    border: 10px solid #ff1100;
    border-radius: 5px;
    pointer-events: none;
}
.mark-walls {
    left: 14px;
    top: 192px;
    width: 379px;
    height: 44px;
}
.mark-infill {
    left: 401px;
    top: 503px;
    bottom: 0;
    width: 635px;
    border-bottom: none;
    border-radius: 5px 5px 0 0;
}
```
